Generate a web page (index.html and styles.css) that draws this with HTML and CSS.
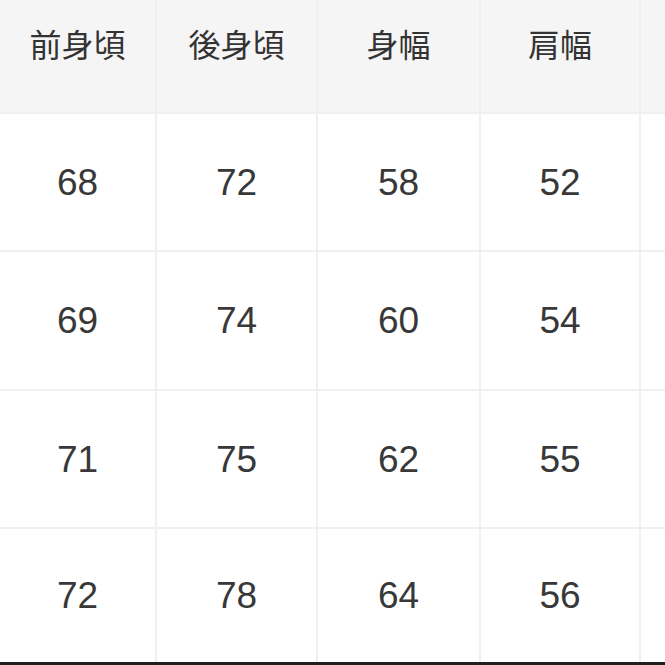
FILE: index.html
```html
<!DOCTYPE html>
<html lang="ja">
<head>
<meta charset="utf-8">
<title>サイズ表</title>
<link rel="stylesheet" href="styles.css">
</head>
<body>
<div class="table">
  <div class="cell head">前身頃</div>
  <div class="cell head">後身頃</div>
  <div class="cell head">身幅</div>
  <div class="cell head">肩幅</div>
  <div class="cell head"></div>

  <div class="cell num">68</div>
  <div class="cell num">72</div>
  <div class="cell num">58</div>
  <div class="cell num">52</div>
  <div class="cell num"></div>

  <div class="cell num">69</div>
  <div class="cell num">74</div>
  <div class="cell num">60</div>
  <div class="cell num">54</div>
  <div class="cell num"></div>

  <div class="cell num">71</div>
  <div class="cell num">75</div>
  <div class="cell num">62</div>
  <div class="cell num">55</div>
  <div class="cell num"></div>

  <div class="cell num">72</div>
  <div class="cell num">78</div>
  <div class="cell num">64</div>
  <div class="cell num">56</div>
  <div class="cell num"></div>
</div>
</body>
</html>
```
FILE: styles.css
```css
html, body {
  margin: 0;
  padding: 0;
  width: 665px;
  height: 665px;
  overflow: hidden;
  background: #ffffff;
}

.table {
  display: grid;
  grid-template-columns: 155px 159px 161px 158px 24px;
  grid-template-rows: 112px 136px 137px 136px 133px;
  gap: 2px;
  background: #f0f0f0;
  width: 665px;
  height: 662px;
  border-bottom: 3px solid #1f1f1f;
  overflow: hidden;
}

.cell {
  display: flex;
  justify-content: center;
  color: #333333;
  background: #ffffff;
}

.head {
  background: #f5f5f5;
  align-items: flex-start;
  padding-top: 21px;
  line-height: 44px;
  font-family: "Noto Sans CJK JP", "Noto Sans", sans-serif;
  font-size: 32px;
  font-weight: 400;
}

.num {
  align-items: center;
  font-family: "Liberation Sans", Arial, sans-serif;
  font-size: 37px;
  line-height: 1;
  color: #383838;
}
```
